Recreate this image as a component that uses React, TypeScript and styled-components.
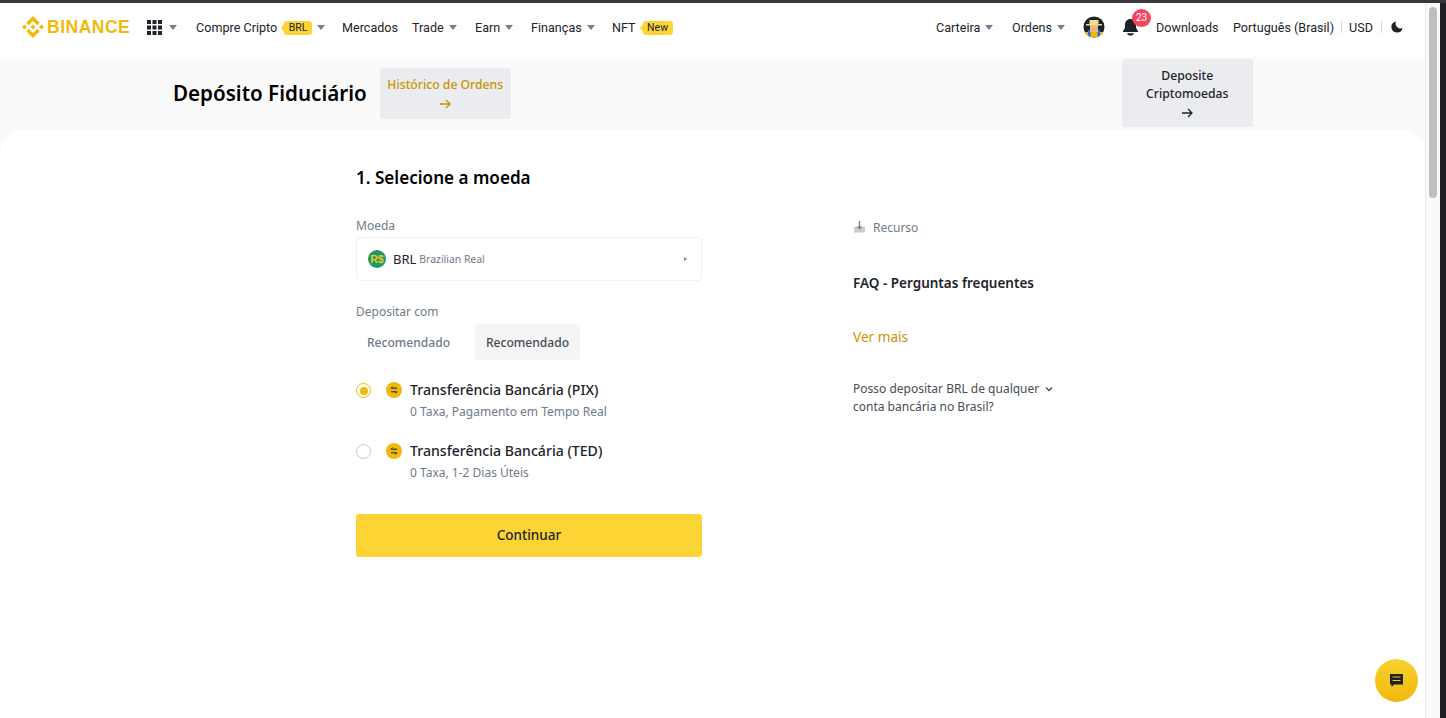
import React from "react";
import styled, { createGlobalStyle } from "styled-components";

const Global = createGlobalStyle`
  html, body { margin: 0; padding: 0; height: 100%; overflow: hidden; background: #fff; }
  body { font-family: "Noto Sans", "Liberation Sans", sans-serif; color: #1e2329; }
  * { box-sizing: border-box; }
`;

const Window = styled.div`
  width: 1446px;
  height: 718px;
  display: flex;
  flex-direction: column;
  background: #1e2026;
  overflow: hidden;
`;
const TopEdge = styled.div`
  height: 3px;
  flex: none;
  background: #36383d;
`;
const Viewport = styled.div`
  flex: 1;
  display: flex;
  min-height: 0;
  padding-right: 6px;
`;
const Page = styled.div`
  width: 1425px;
  display: flex;
  flex-direction: column;
  background: #fafafa;
`;
const Track = styled.div`
  width: 15px;
  background: #fafafa;
  border-left: 1px solid #e8e8e8;
  padding: 4px 3px;
`;
const Thumb = styled.div`
  width: 8px;
  height: 191px;
  border-radius: 4px;
  background: #bfbfbf;
`;

const Header = styled.header`
  height: 54px;
  flex: none;
  display: flex;
  align-items: center;
  padding: 0 0 6px 22px;
  font-family: Roboto, "Liberation Sans", sans-serif;
  font-size: 12.6px;
  background: #fff;
`;
const Logo = styled.div`
  display: flex;
  align-items: center;
  gap: 3px;
  width: 125px;
  color: #f0b90b;
  font-family: "Liberation Sans", sans-serif;
  font-size: 17.5px;
  font-weight: 700;
  letter-spacing: 0.5px;
`;
const Left = styled.nav`
  display: flex;
  align-items: center;
`;
const Right = styled.nav`
  display: flex;
  align-items: center;
  margin-left: auto;
  padding-right: 22px;
`;
const NavItem = styled.span<{ $w: number; $pad?: number }>`
  display: flex;
  align-items: center;
  width: ${(p) => p.$w}px;
  padding-left: ${(p) => p.$pad ?? 0}px;
  flex: none;
  white-space: nowrap;
  color: #1e2329;
`;
const Caret = styled.i<{ $gap?: number }>`
  width: 0;
  height: 0;
  margin-left: ${(p) => p.$gap ?? 5}px;
  border-left: 4px solid transparent;
  border-right: 4px solid transparent;
  border-top: 5px solid #76808f;
  margin-top: 1px;
`;
const Tag = styled.b`
  position: relative;
  margin: 1px 0 0 7px;
  padding: 0 4.5px;
  height: 14px;
  line-height: 14px;
  background: #fcd535;
  border-radius: 3px;
  font-size: 10.5px;
  font-weight: 400;
  color: #1e2329;
  &::before {
    content: "";
    position: absolute;
    left: -3px;
    top: 3px;
    border-top: 4px solid transparent;
    border-bottom: 4px solid transparent;
    border-right: 3px solid #fcd535;
  }
`;
const Sep = styled.i`
  width: 1px;
  height: 12px;
  flex: none;
  background: #d5d8dc;
`;
const Badge = styled.span`
  position: absolute;
  left: 10px;
  top: -9px;
  width: 19px;
  height: 18px;
  border-radius: 50%;
  background: #f6465d;
  color: #fff;
  font-size: 10px;
  line-height: 18px;
  text-align: center;
`;
const BellWrap = styled.span`
  position: relative;
  display: flex;
  width: 34px;
  flex: none;
`;

const Band = styled.div`
  height: 73px;
  flex: none;
  display: flex;
  align-items: flex-start;
  background: #fafafa;
  padding-left: 173px;
`;
const PageTitle = styled.h1`
  margin: 22px 13px 0 0;
  font-size: 20.6px;
  line-height: 28px;
  font-weight: 600;
  color: #000;
  white-space: nowrap;
`;
const BandButton = styled.div<{ $gold?: boolean }>`
  flex: none;
  display: flex;
  flex-direction: column;
  align-items: center;
  text-align: center;
  width: 131px;
  background: #eaecef;
  border-radius: 3px;
  font-size: 12.2px;
  font-weight: 500;
  line-height: 18px;
  color: ${(p) => (p.$gold ? "#c99400" : "#1e2329")};
`;
const HistoryButton = styled(BandButton)`
  height: 51px;
  margin-top: 11px;
  padding-top: 8px;
  svg {
    margin-top: 3px;
  }
`;
const CryptoButton = styled(BandButton)`
  height: 68px;
  margin-top: 2px;
  margin-left: 611px;
  padding-top: 8px;
  svg {
    margin-top: 3px;
  }
`;

const Card = styled.main`
  flex: 1;
  background: #fff;
  border-radius: 24px 24px 0 0;
  padding-left: 356px;
  display: flex;
  position: relative;
`;
const FormColumn = styled.section`
  width: 346px;
  flex: none;
  display: flex;
  flex-direction: column;
`;
const SideColumn = styled.aside`
  margin-left: 151px;
  width: 210px;
  display: flex;
  flex-direction: column;
  padding-top: 88px;
`;
const StepTitle = styled.h2`
  margin: 35px 0 0;
  font-size: 17.1px;
  line-height: 26px;
  font-weight: 600;
  color: #000;
`;
const FieldLabel = styled.div`
  font-size: 12px;
  line-height: 16px;
  color: #707a8a;
`;
const MoedaLabel = styled(FieldLabel)`
  margin-top: 27px;
`;
const DepositLabel = styled(FieldLabel)`
  margin-top: 23px;
`;
const Select = styled.div`
  margin-top: 3px;
  height: 44px;
  border: 1px solid #f0f1f2;
  border-radius: 4px;
  display: flex;
  align-items: center;
  padding: 0 14px 0 11px;
`;
const Code = styled.span`
  margin-left: 7px;
  font-size: 13px;
  color: #1e2329;
`;
const CodeName = styled.span`
  margin-left: 3px;
  font-size: 10.4px;
  color: #707a8a;
`;
const SmallArrow = styled.i`
  margin-left: auto;
  border-top: 2.5px solid transparent;
  border-bottom: 2.5px solid transparent;
  border-left: 3px solid #76808f;
`;
const Tabs = styled.div`
  margin-top: 4px;
  display: flex;
  gap: 14px;
`;
const Tab = styled.div<{ $on?: boolean }>`
  height: 36px;
  width: 105px;
  display: flex;
  align-items: center;
  justify-content: center;
  border-radius: 3px;
  font-size: 12.1px;
  font-weight: 500;
  color: ${(p) => (p.$on ? "#474d57" : "#707a8a")};
  background: ${(p) => (p.$on ? "#f5f5f5" : "transparent")};
`;
const Methods = styled.div`
  margin-top: 19px;
  display: flex;
  flex-direction: column;
  gap: 20px;
`;
const Method = styled.div`
  display: flex;
  align-items: flex-start;
  height: 41px;
`;
const Radio = styled.span<{ $on?: boolean }>`
  width: 15px;
  height: 15px;
  margin-top: 4px;
  flex: none;
  border-radius: 50%;
  border: 1px solid ${(p) => (p.$on ? "#f0b90b" : "#c4c7cc")};
  display: flex;
  align-items: center;
  justify-content: center;
  &::after {
    content: "";
    display: ${(p) => (p.$on ? "block" : "none")};
    width: 8px;
    height: 8px;
    border-radius: 50%;
    background: #f0b90b;
  }
`;
const MethodIcon = styled.span`
  margin: 3px 8px 0 15px;
  width: 16px;
  height: 16px;
  flex: none;
  display: flex;
`;
const MethodText = styled.div`
  display: flex;
  flex-direction: column;
`;
const MethodTitle = styled.div`
  font-size: 14.1px;
  line-height: 22px;
  font-weight: 500;
  color: #1e2329;
  white-space: nowrap;
`;
const MethodSub = styled.div`
  margin-top: 1px;
  font-size: 12px;
  line-height: 20px;
  color: #707a8a;
  white-space: nowrap;
`;
const Continue = styled.div`
  margin-top: 33px;
  height: 43px;
  background: #fcd535;
  border-radius: 3px;
  display: flex;
  align-items: center;
  justify-content: center;
  padding-bottom: 1px;
  font-size: 13.5px;
  font-weight: 500;
  color: #1e2329;
`;
const Resource = styled.div`
  display: flex;
  align-items: center;
  gap: 7px;
  height: 18px;
  font-size: 12px;
  color: #707a8a;
`;
const FaqTitle = styled.h3`
  margin: 37px 0 0;
  font-size: 13.5px;
  line-height: 20px;
  font-weight: 600;
  color: #1e2329;
  white-space: nowrap;
`;
const SeeMore = styled.div`
  margin-top: 34px;
  font-size: 13.6px;
  line-height: 20px;
  color: #c99400;
`;
const Question = styled.div`
  margin-top: 33px;
  display: flex;
  align-items: flex-start;
  font-size: 12px;
  line-height: 18px;
  color: #474d57;
`;
const QuestionText = styled.span`
  width: 191px;
  flex: none;
`;
const ChatButton = styled.div`
  position: absolute;
  left: 1375px;
  bottom: 16px;
  width: 43px;
  height: 43px;
  border-radius: 50%;
  background: linear-gradient(180deg, #f8d12f, #f0b90b);
  display: flex;
  align-items: center;
  justify-content: center;
`;

const ArrowRight = ({ color }: { color: string }) => (
  <svg width="14" height="14" viewBox="0 0 14 14" fill="none" stroke={color} strokeWidth="1.3">
    <path d="M2 7h10M8 3l4 4-4 4" />
  </svg>
);

const LogoMark = () => (
  <svg width="22" height="22" viewBox="0 0 126.61 126.61" fill="#f0b90b">
    <path d="M38.73 53.2l24.59-24.58 24.6 24.6 14.3-14.31L63.32 0 24.42 38.9zM0 63.31l14.3-14.31 14.31 14.31-14.31 14.3zM38.73 73.41l24.59 24.59 24.6-24.6 14.31 14.29-38.9 38.91-38.91-38.88zM98 63.31l14.3-14.31 14.31 14.3-14.31 14.32z" />
    <path d="M77.83 63.3L63.32 48.78 52.59 59.51l-1.24 1.23-2.54 2.54 14.51 14.52L77.83 63.31z" />
  </svg>
);

const GridIcon = () => (
  <svg width="15" height="15" viewBox="0 0 15 15" fill="#1e2329">
    {[0, 5.5, 11].flatMap((y) =>
      [0, 5.5, 11].map((x) => <rect key={`${x}-${y}`} x={x} y={y} width="4" height="4" />)
    )}
  </svg>
);

const Avatar = () => (
  <svg width="22" height="22" viewBox="0 0 22 22">
    <defs>
      <clipPath id="av"><circle cx="11" cy="11" r="10.5" /></clipPath>
    </defs>
    <g clipPath="url(#av)">
      <rect width="22" height="22" fill="#1e2329" />
      <rect x="2" y="16" width="18" height="6" fill="#f0b90b" />
      <rect x="5" y="14" width="2.5" height="8" fill="#2b6fc2" />
      <rect x="14.500" y="14" width="2.5" height="8" fill="#2b6fc2" />
      <rect x="7" y="9" width="8" height="7" fill="#e8b48a" />
      <rect x="3" y="8" width="16" height="1.500" fill="#f3d98b" />
      <rect x="6.500" y="4" width="9" height="4" fill="#f3d98b" />
    </g>
  </svg>
);

const Bell = () => (
  <svg width="17" height="18" viewBox="0 0 17 18" fill="#1e2329">
    <path d="M8.5 1C5 1 3 3.6 3 6.8V10L1 13v1h15v-1l-2-3V6.800C14 3.600 12 1 8.500 1z" />
    <path d="M5 15.200h7c-.5 1.500-1.800 2.300-3.500 2.300S5.500 16.700 5 15.200z" />
  </svg>
);

const Moon = () => (
  <svg width="12" height="12" viewBox="0 0 12 12" fill="#1e2329">
    <path d="M5 .5a5.600 5.600 0 1 0 6.500 6.500A5 5 0 0 1 5 .5z" />
  </svg>
);

const RealCoin = () => (
  <svg width="18" height="18" viewBox="0 0 18 18">
    <circle cx="9" cy="9" r="9" fill="#1f9a66" />
    <text x="9" y="12.600" textAnchor="middle" fontSize="10.500" fontWeight="700" fill="#f3c623" fontFamily="Liberation Sans, sans-serif">R$</text>
  </svg>
);

const Transfer = () => (
  <svg width="16" height="16" viewBox="0 0 16 16">
    <circle cx="8" cy="8" r="8" fill="#f0b90b" />
    <path d="M11 6.200H5.200M6.700 4.500L5 6.200M5 9.800h5.800M9.300 11.500l1.700-1.700" stroke="#1e2329" strokeWidth="1" fill="none" />
  </svg>
);

const ResourceIcon = () => (
  <svg width="13" height="12" viewBox="0 0 13 12">
    <rect x="1" y="6" width="11" height="5.500" fill="#c9ccd1" />
    <path d="M6.500 0v7" stroke="#76808f" strokeWidth="1.400" />
    <path d="M3.500 5.500h6l-3 3z" fill="#76808f" />
  </svg>
);

const Chevron = () => (
  <svg width="10" height="10" viewBox="0 0 10 10" fill="none" stroke="#474d57" strokeWidth="1.400" style={{ marginTop: 4 }}>
    <path d="M2 3.500l3 3 3-3" />
  </svg>
);

const ChatIcon = () => (
  <svg width="15" height="15" viewBox="0 0 15 15">
    <path d="M1 1h13v10.500H5L2.500 14v-2.500H1z" fill="#1e2329" />
    <path d="M3.500 4h8M3.500 7.500h8" stroke="#f0c419" strokeWidth="1.200" />
  </svg>
);

export default function App() {
  return (
    <Window>
      <Global />
      <TopEdge />
      <Viewport>
        <Page>
          <Header>
            <Logo>
              <LogoMark />
              BINANCE
            </Logo>
            <Left>
              <NavItem $w={49}>
                <GridIcon />
                <Caret $gap={7} />
              </NavItem>
              <NavItem $w={146}>
                Compre Cripto
                <Tag>BRL</Tag>
                <Caret />
              </NavItem>
              <NavItem $w={70}>Mercados</NavItem>
              <NavItem $w={63}>
                Trade
                <Caret />
              </NavItem>
              <NavItem $w={56}>
                Earn
                <Caret />
              </NavItem>
              <NavItem $w={81}>
                Finanças
                <Caret />
              </NavItem>
              <NavItem $w={62}>
                NFT
                <Tag>New</Tag>
              </NavItem>
            </Left>
            <Right>
              <NavItem $w={76}>
                Carteira
                <Caret />
              </NavItem>
              <NavItem $w={71}>
                Ordens
                <Caret />
              </NavItem>
              <NavItem $w={39}>
                <Avatar />
              </NavItem>
              <BellWrap>
                <Bell />
                <Badge>23</Badge>
              </BellWrap>
              <NavItem $w={77}>Downloads</NavItem>
              <NavItem $w={108}>Português (Brasil)</NavItem>
              <Sep />
              <NavItem $w={39} $pad={7}>USD</NavItem>
              <Sep />
              <NavItem $w={21} $pad={9}>
                <Moon />
              </NavItem>
            </Right>
          </Header>
          <Band>
            <PageTitle>Depósito Fiduciário</PageTitle>
            <HistoryButton $gold>
              Histórico de Ordens
              <ArrowRight color="#c99400" />
            </HistoryButton>
            <CryptoButton>
              Deposite
              <br />
              Criptomoedas
              <ArrowRight color="#1e2329" />
            </CryptoButton>
          </Band>
          <Card>
            <FormColumn>
              <StepTitle>1. Selecione a moeda</StepTitle>
              <MoedaLabel>Moeda</MoedaLabel>
              <Select>
                <RealCoin />
                <Code>BRL</Code>
                <CodeName>Brazilian Real</CodeName>
                <SmallArrow />
              </Select>
              <DepositLabel>Depositar com</DepositLabel>
              <Tabs>
                <Tab>Recomendado</Tab>
                <Tab $on>Recomendado</Tab>
              </Tabs>
              <Methods>
                <Method>
                  <Radio $on />
                  <MethodIcon>
                    <Transfer />
                  </MethodIcon>
                  <MethodText>
                    <MethodTitle>Transferência Bancária (PIX)</MethodTitle>
                    <MethodSub>0 Taxa, Pagamento em Tempo Real</MethodSub>
                  </MethodText>
                </Method>
                <Method>
                  <Radio />
                  <MethodIcon>
                    <Transfer />
                  </MethodIcon>
                  <MethodText>
                    <MethodTitle>Transferência Bancária (TED)</MethodTitle>
                    <MethodSub>0 Taxa, 1-2 Dias Úteis</MethodSub>
                  </MethodText>
                </Method>
              </Methods>
              <Continue>Continuar</Continue>
            </FormColumn>
            <SideColumn>
              <Resource>
                <ResourceIcon />
                Recurso
              </Resource>
              <FaqTitle>FAQ - Perguntas frequentes</FaqTitle>
              <SeeMore>Ver mais</SeeMore>
              <Question>
                <QuestionText>Posso depositar BRL de qualquer conta bancária no Brasil?</QuestionText>
                <Chevron />
              </Question>
            </SideColumn>
            <ChatButton>
              <ChatIcon />
            </ChatButton>
          </Card>
        </Page>
        <Track>
          <Thumb />
        </Track>
      </Viewport>
    </Window>
  );
}
